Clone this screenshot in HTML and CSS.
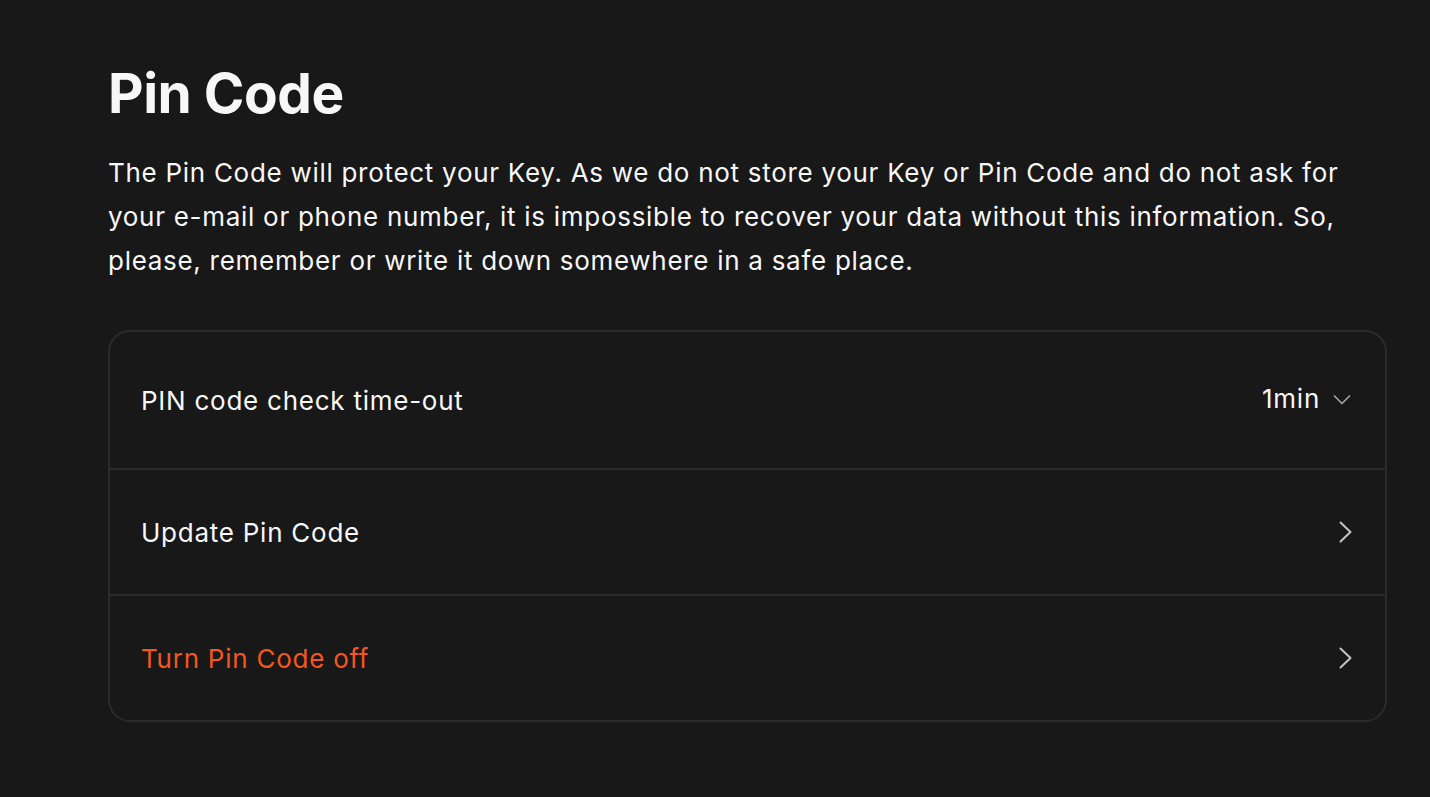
FILE: index.html
```html
<!DOCTYPE html>
<html>
<head>
<meta charset="utf-8">
<link rel="stylesheet" href="styles.css">
</head>
<body>
<main class="page">
  <h1 class="title">Pin Code</h1>
  <p class="desc">The Pin Code will protect your Key. As we do not store your Key or Pin Code and do not ask for your e-mail or phone number, it is impossible to recover your data without this information. So, please, remember or write it down somewhere in a safe place.</p>
  <section class="card">
    <div class="row row-select">
      <span class="label">PIN code check time-out</span>
      <span class="value">1min
        <svg class="caret" width="18" height="12" viewBox="0 0 18 12"><path d="M1.5 2l7.5 7.5L16.5 2" fill="none" stroke="#a6a69c" stroke-width="1.7" stroke-linecap="round" stroke-linejoin="round"/></svg>
      </span>
    </div>
    <div class="row">
      <span class="label">Update Pin Code</span>
      <svg class="chev" width="16" height="24" viewBox="0 0 16 24"><path d="M2.5 2.5l10 9.5-10 9.5" fill="none" stroke="#c4c4c4" stroke-width="2" stroke-linecap="round" stroke-linejoin="round"/></svg>
    </div>
    <div class="row">
      <span class="label danger">Turn Pin Code off</span>
      <svg class="chev" width="16" height="24" viewBox="0 0 16 24"><path d="M2.5 2.5l10 9.5-10 9.5" fill="none" stroke="#c4c4c4" stroke-width="2" stroke-linecap="round" stroke-linejoin="round"/></svg>
    </div>
  </section>
</main>
</body>
</html>
```
FILE: styles.css
```css
html, body {
  margin: 0;
  padding: 0;
  background: #181818;
  color: #f7f7f7;
  font-family: Inter, "Noto Sans", sans-serif;
}
.page {
  padding: 60px 43px 0 108px;
}
.title {
  margin: 0;
  font-size: 55px;
  font-weight: 700;
  line-height: 66px;
  letter-spacing: -0.5px;
}
.desc {
  margin: 25px 0 0 0;
  font-size: 26px;
  line-height: 44px;
  letter-spacing: 0.71px;
  max-width: 1270px;
}
.card {
  margin-top: 47px;
  border: 2px solid #2b2b2b;
  border-radius: 22px;
  display: flex;
  flex-direction: column;
}
.row {
  display: flex;
  align-items: center;
  justify-content: space-between;
  height: 124px;
  padding: 0 31px 0 31px;
  border-top: 2px solid #2b2b2b;
  font-size: 26px;
  letter-spacing: 0.75px;
}
.row:first-child {
  border-top: none;
}
.row-select {
  height: 136px;
}
.value {
  display: flex;
  align-items: center;
  gap: 13px;
  margin-top: -4px;
  margin-right: 3px;
}
.caret {
  display: block;
  margin-top: 3px;
}
.danger {
  color: #f4561f;
}
.chev {
  display: block;
}
```
